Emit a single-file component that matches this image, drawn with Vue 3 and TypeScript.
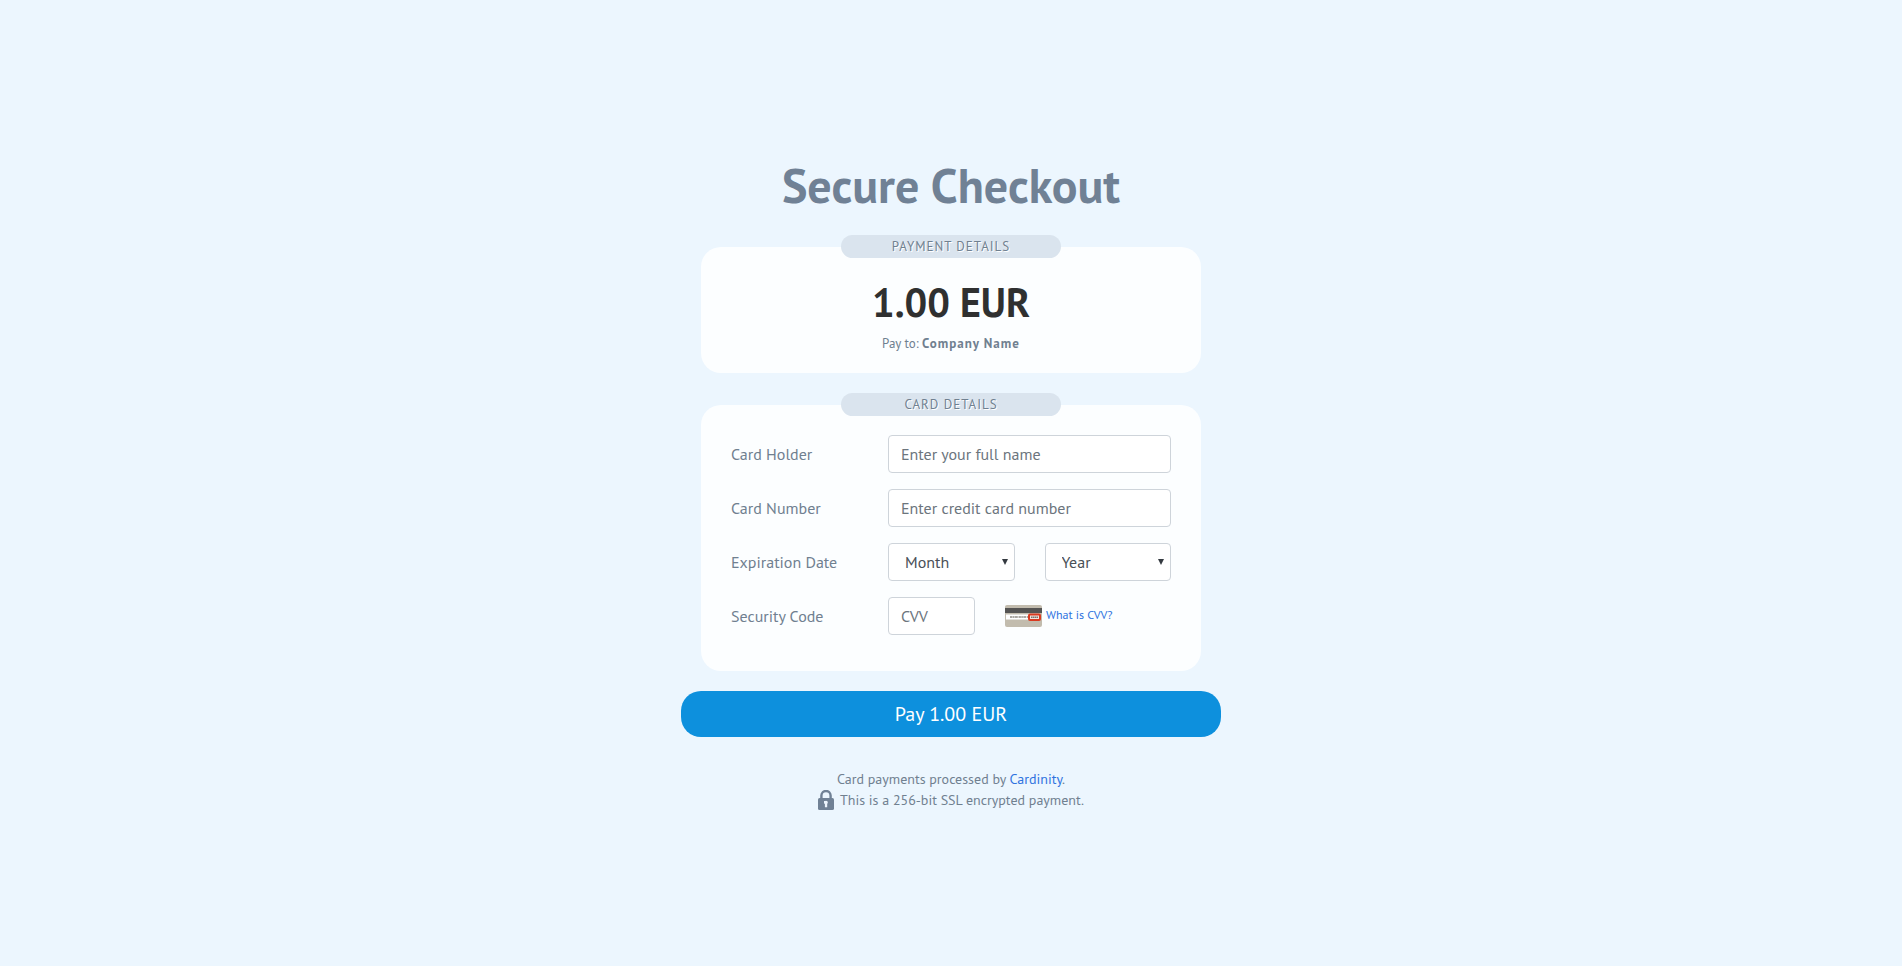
<script setup lang="ts">
import { ref } from 'vue'

const holder = ref('')
const cardNumber = ref('')
const month = ref('')
const year = ref('')
const cvv = ref('')

const amount = '1.00 EUR'
const months = Array.from({ length: 12 }, (_, i) => String(i + 1).padStart(2, '0'))
const years = Array.from({ length: 12 }, (_, i) => String(2019 + i))
</script>

<template>
  <main class="page">
    <h1 class="title">Secure Checkout</h1>

    <form class="checkout" @submit.prevent>
      <section class="panel summary">
        <h2 class="tag">PAYMENT DETAILS</h2>
        <p class="amount">{{ amount }}</p>
        <p class="payee">Pay to: <strong>Company Name</strong></p>
      </section>

      <section class="panel details">
        <h2 class="tag">CARD DETAILS</h2>
        <div class="row">
          <label for="holder">Card Holder</label>
          <input id="holder" v-model="holder" class="control" type="text" placeholder="Enter your full name" />
        </div>
        <div class="row">
          <label for="number">Card Number</label>
          <input id="number" v-model="cardNumber" class="control" type="text" placeholder="Enter credit card number" />
        </div>
        <div class="row">
          <label for="month">Expiration Date</label>
          <div class="pair">
            <div class="pick">
              <select id="month" v-model="month" class="control">
                <option value="">Month</option>
                <option v-for="m in months" :key="m" :value="m">{{ m }}</option>
              </select>
              <svg class="arrow" viewBox="0 0 6 6" aria-hidden="true"><path d="M0 0H6L3 6Z" /></svg>
            </div>
            <div class="pick">
              <select v-model="year" class="control" aria-label="Expiration year">
                <option value="">Year</option>
                <option v-for="y in years" :key="y" :value="y">{{ y }}</option>
              </select>
              <svg class="arrow" viewBox="0 0 6 6" aria-hidden="true"><path d="M0 0H6L3 6Z" /></svg>
            </div>
          </div>
        </div>
        <div class="row">
          <label for="cvv">Security Code</label>
          <div class="code">
            <input id="cvv" v-model="cvv" class="control cvv" type="text" placeholder="CVV" />
            <a class="hint" href="#cvv-help">
              <svg class="card-back" viewBox="0 0 37 22" aria-hidden="true">
                <rect width="37" height="22" rx="2" fill="#c2bcae" />
                <rect y="3" width="37" height="5" fill="#555453" />
                <rect x="1" y="9.5" width="33" height="5" fill="#fff" />
                <path d="M5 12H23" stroke="#8f8b84" stroke-width="1.4" stroke-dasharray="2.4 .4 1.6 .4 3 .7" />
                <rect x="24" y="9.6" width="11" height="5.4" rx="1" fill="#f3e3dd" stroke="#d93a20" stroke-width="2" />
                <path d="M26 12.2H33" stroke="#77736c" stroke-width="1.4" stroke-dasharray="1.6 .4" />
              </svg>
              <span>What is CVV?</span>
            </a>
          </div>
        </div>
      </section>

      <button class="pay" type="submit">Pay {{ amount }}</button>
    </form>

    <footer class="notes">
      <p>Card payments processed by <a href="#cardinity">Cardinity</a>.</p>
      <p class="secure">
        <svg class="lock" viewBox="0 0 16 20" aria-hidden="true">
          <path d="M3.4 9V5.6a4.6 4.6 0 0 1 9.2 0V9" fill="none" stroke="#708195" stroke-width="2.4" />
          <rect y="8" width="16" height="12" rx="1.6" fill="#708195" />
          <path d="M6 11H9.2V17.2H6.9V13.6H6Z" fill="#edf5fd" />
          <circle cx="8" cy="12.4" r="1.7" fill="#edf5fd" />
        </svg>
        <span>This is a 256-bit SSL encrypted payment.</span>
      </p>
    </footer>
  </main>
</template>

<style>
body {
  margin: 0;
  background: #ecf6fe;
}
</style>

<style scoped>
.page {
  box-sizing: border-box;
  min-height: 100vh;
  padding: 156px 16px 48px;
  display: flex;
  flex-direction: column;
  align-items: center;
  color: #708090;
  font-family: "PT Sans", Lato, "Noto Sans", sans-serif;
  font-size: 16px;
  line-height: 24px;
}
h1, h2, p {
  margin: 0;
}
a {
  color: #2f73e0;
  text-decoration: none;
}
.title {
  margin-bottom: 33px;
  font-size: 48px;
  line-height: 58px;
  font-weight: 700;
  color: #708195;
}
.checkout {
  width: 100%;
  max-width: 540px;
  display: flex;
  flex-direction: column;
}
.panel {
  margin: 0 20px;
  border-radius: 20px;
  background: #fcfeff;
  display: flex;
  flex-direction: column;
}
.tag {
  align-self: center;
  width: 220px;
  margin-top: -12px;
  border-radius: 12px;
  background: #dae4ee;
  font-size: 13px;
  line-height: 23px;
  font-weight: 400;
  letter-spacing: 1px;
  text-align: center;
  text-shadow: 1px 1px 0 #fff;
}
.summary {
  align-items: center;
  padding-bottom: 17px;
  margin-bottom: 32px;
}
.amount {
  margin-top: 20px;
  font-size: 40px;
  line-height: 48px;
  font-weight: 700;
  color: #2f3030;
}
.payee {
  margin-top: 6px;
  font-size: 13px;
}
.payee strong {
  letter-spacing: 1px;
}
.details {
  padding: 0 30px 36px;
  margin-bottom: 20px;
}
.row {
  display: grid;
  grid-template-columns: 157px 1fr;
  align-items: center;
  margin-bottom: 16px;
}
.tag + .row {
  margin-top: 19px;
}
.row:last-child {
  margin-bottom: 0;
}
.control {
  box-sizing: border-box;
  width: 100%;
  height: 38px;
  padding: 0 12px;
  border: 1px solid #ced4da;
  border-radius: 4px;
  background: #fff;
  color: #495057;
  font: inherit;
}
.control::placeholder {
  color: #6c757d;
  opacity: 1;
}
.pair {
  display: grid;
  grid-template-columns: 1fr 1fr;
  gap: 30px;
}
.pick {
  position: relative;
}
select.control {
  appearance: none;
  padding: 0 16px;
}
.arrow {
  position: absolute;
  top: 16px;
  right: 7px;
  width: 6px;
  height: 6px;
  fill: #343a40;
  pointer-events: none;
}
.code {
  display: flex;
  align-items: center;
  gap: 30px;
}
.cvv {
  width: 87px;
}
.hint {
  display: flex;
  align-items: flex-start;
  gap: 4px;
  font-size: 12px;
  line-height: 20px;
}
.card-back {
  width: 37px;
  height: 22px;
}
.pay {
  height: 46px;
  padding: 0 16px;
  border: 0;
  border-radius: 20px;
  background: #0d90dd;
  color: #fff;
  font: inherit;
  font-size: 20px;
}
.notes {
  margin-top: 32px;
  font-size: 14px;
  line-height: 21px;
  text-align: center;
}
.secure {
  display: flex;
  justify-content: center;
  align-items: flex-start;
  gap: 6px;
}
.lock {
  width: 16px;
  height: 20px;
}
</style>
